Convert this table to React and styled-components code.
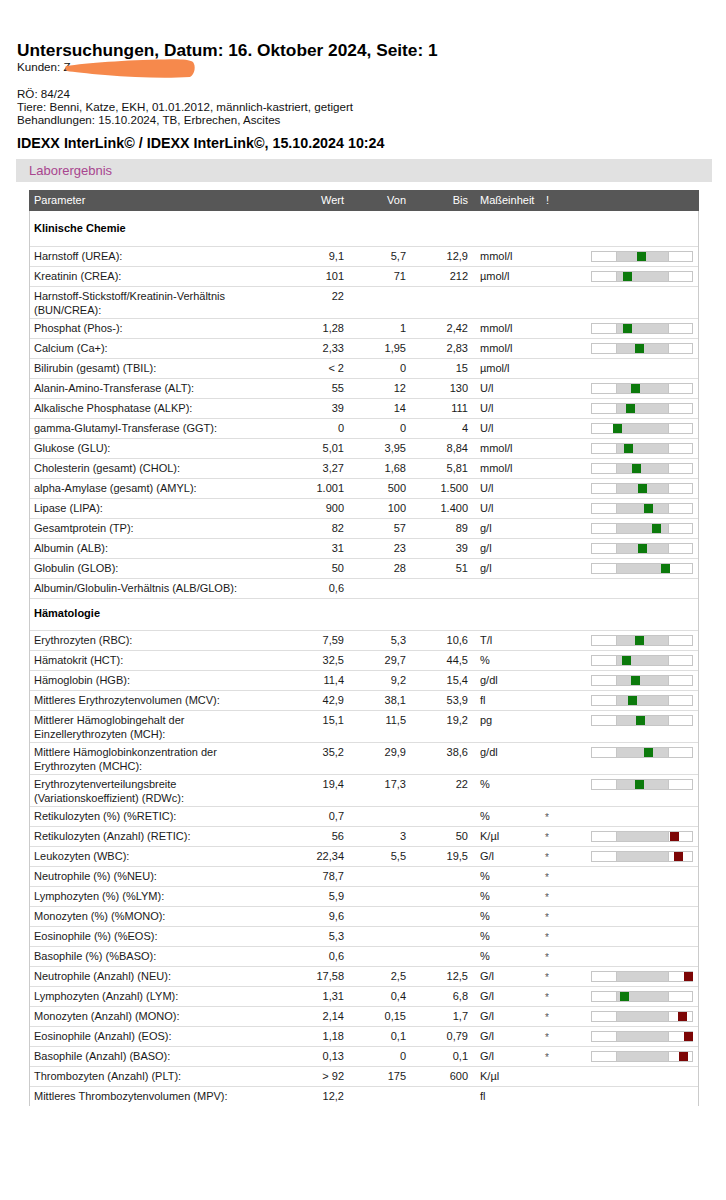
import React from "react";
import styled, { createGlobalStyle } from "styled-components";

const GlobalStyle = createGlobalStyle`
  html, body {
    margin: 0;
    padding: 0;
    background: #fff;
  }
  body {
    font-family: "Liberation Sans", Arial, sans-serif;
    color: #111;
  }
`;

const cols = "254px 60px 62px 62px 72px 45px 1fr";

const Page = styled.div`
  width: 726px;
  box-sizing: border-box;
  padding: 40px 14px 0 16px;
`;

const Head = styled.div`
  padding-left: 1px;
`;

const Title = styled.h1`
  margin: 0;
  font-size: 17.3px;
  line-height: 20px;
  font-weight: bold;
  color: #000;
`;

const MetaLine = styled.div`
  position: relative;
  font-size: 11.6px;
  line-height: 13px;
  margin-top: ${p => (p.$gap ? "14px" : "0")};
`;

const Redaction = styled.svg`
  position: absolute;
  left: 48px;
  top: -2px;
`;

const Source = styled.h2`
  margin: 8px 0 0;
  font-size: 14.3px;
  line-height: 18px;
  font-weight: bold;
  color: #000;
`;

const SectionBar = styled.div`
  margin-top: 7px;
  height: 23px;
  line-height: 23px;
  background: #e1e1e1;
  padding-left: 13px;
  font-size: 13px;
  color: #a8468f;
`;

const Table = styled.div`
  margin: 8px 13px 0;
  font-size: 11px;
`;

const HeadRow = styled.div`
  display: grid;
  grid-template-columns: 1px ${cols} 1px;
  height: 21px;
  line-height: 21px;
  background: #575757;
  color: #fff;
`;

const Body = styled.div`
  border-left: 1px solid #cbcbcb;
  border-right: 1px solid #cbcbcb;
`;

const Section = styled.div`
  box-sizing: border-box;
  padding: ${p => (p.$first ? "10px 0 11px 4px" : "7px 0 10px 4px")};
  border-top: ${p => (p.$first ? "none" : "1px solid #dedede")};
  line-height: 14px;
  font-weight: bold;
  color: #000;
`;

const Row = styled.div`
  display: grid;
  grid-template-columns: ${cols};
  box-sizing: border-box;
  min-height: 20px;
  padding: 2px 0 1px;
  border-top: 1px solid #dedede;
  line-height: 14px;
  color: #1a1a1a;
`;

const Param = styled.div`
  padding-left: 4px;
  white-space: pre-line;
`;

const Num = styled.div`
  text-align: right;
  white-space: nowrap;
`;

const Unit = styled.div`
  padding-left: 12px;
`;

const Flag = styled.div`
  height: 14px;
  display: flex;
  align-items: flex-end;
  padding-left: 5px;
  color: #555;
  font-size: 10px;
  line-height: 10px;
`;

const HeadFlag = styled.div`
  padding-left: 6px;
`;

const BarCell = styled.div`
  height: 14px;
  display: flex;
  align-items: center;
  padding-left: 6px;
`;

const Bar = styled.div`
  position: relative;
  display: flex;
  width: 102px;
  height: 11px;
`;

const Seg = styled.div`
  box-sizing: border-box;
  width: ${p => p.$w}px;
  height: 100%;
  background: ${p => (p.$mid ? "#d2d2d2" : "#fff")};
  border: ${p => (p.$mid ? "none" : "1px solid #c6c6c6")};
  border-top: 1px solid #c6c6c6;
  border-bottom: 1px solid #c6c6c6;
`;

const Marker = styled.div`
  position: absolute;
  top: 1px;
  width: 9px;
  height: 9px;
  background: ${p => (p.$out ? "#7d0606" : "#0c7a0c")};
`;

const num = s => parseFloat(String(s).replace(/\./g, "").replace(",", "."));

const chemie = [
  ["Harnstoff (UREA):", "9,1", "5,7", "12,9", "mmol/l"],
  ["Kreatinin (CREA):", "101", "71", "212", "µmol/l"],
  ["Harnstoff-Stickstoff/Kreatinin-Verhältnis\n(BUN/CREA):", "22", "", "", ""],
  ["Phosphat (Phos-):", "1,28", "1", "2,42", "mmol/l"],
  ["Calcium (Ca+):", "2,33", "1,95", "2,83", "mmol/l"],
  ["Bilirubin (gesamt) (TBIL):", "< 2", "0", "15", "µmol/l"],
  ["Alanin-Amino-Transferase (ALT):", "55", "12", "130", "U/l"],
  ["Alkalische Phosphatase (ALKP):", "39", "14", "111", "U/l"],
  ["gamma-Glutamyl-Transferase (GGT):", "0", "0", "4", "U/l"],
  ["Glukose (GLU):", "5,01", "3,95", "8,84", "mmol/l"],
  ["Cholesterin (gesamt) (CHOL):", "3,27", "1,68", "5,81", "mmol/l"],
  ["alpha-Amylase (gesamt) (AMYL):", "1.001", "500", "1.500", "U/l"],
  ["Lipase (LIPA):", "900", "100", "1.400", "U/l"],
  ["Gesamtprotein (TP):", "82", "57", "89", "g/l"],
  ["Albumin (ALB):", "31", "23", "39", "g/l"],
  ["Globulin (GLOB):", "50", "28", "51", "g/l"],
  ["Albumin/Globulin-Verhältnis (ALB/GLOB):", "0,6", "", "", ""],
];

const haema = [
  ["Erythrozyten (RBC):", "7,59", "5,3", "10,6", "T/l"],
  ["Hämatokrit (HCT):", "32,5", "29,7", "44,5", "%"],
  ["Hämoglobin (HGB):", "11,4", "9,2", "15,4", "g/dl"],
  ["Mittleres Erythrozytenvolumen (MCV):", "42,9", "38,1", "53,9", "fl"],
  ["Mittlerer Hämoglobingehalt der\nEinzellerythrozyten (MCH):", "15,1", "11,5", "19,2", "pg"],
  ["Mittlere Hämoglobinkonzentration der\nErythrozyten (MCHC):", "35,2", "29,9", "38,6", "g/dl"],
  ["Erythrozytenverteilungsbreite\n(Variationskoeffizient) (RDWc):", "19,4", "17,3", "22", "%"],
  ["Retikulozyten (%) (%RETIC):", "0,7", "", "", "%", "*"],
  ["Retikulozyten (Anzahl) (RETIC):", "56", "3", "50", "K/µl", "*"],
  ["Leukozyten (WBC):", "22,34", "5,5", "19,5", "G/l", "*"],
  ["Neutrophile (%) (%NEU):", "78,7", "", "", "%", "*"],
  ["Lymphozyten (%) (%LYM):", "5,9", "", "", "%", "*"],
  ["Monozyten (%) (%MONO):", "9,6", "", "", "%", "*"],
  ["Eosinophile (%) (%EOS):", "5,3", "", "", "%", "*"],
  ["Basophile (%) (%BASO):", "0,6", "", "", "%", "*"],
  ["Neutrophile (Anzahl) (NEU):", "17,58", "2,5", "12,5", "G/l", "*"],
  ["Lymphozyten (Anzahl) (LYM):", "1,31", "0,4", "6,8", "G/l", "*"],
  ["Monozyten (Anzahl) (MONO):", "2,14", "0,15", "1,7", "G/l", "*"],
  ["Eosinophile (Anzahl) (EOS):", "1,18", "0,1", "0,79", "G/l", "*"],
  ["Basophile (Anzahl) (BASO):", "0,13", "0", "0,1", "G/l", "*"],
  ["Thrombozyten (Anzahl) (PLT):", "> 92", "175", "600", "K/µl"],
  ["Mittleres Thrombozytenvolumen (MPV):", "12,2", "", "", "fl"],
];

const RangeBar = ({ value, low, high }) => {
  const v = num(value);
  const lo = num(low);
  const hi = num(high);
  const f = (v - lo) / (hi - lo);
  const center = Math.min(97, Math.max(5, 26 + f * 51));
  return (
    <Bar>
      <Seg $w={26} />
      <Seg $w={51} $mid />
      <Seg $w={25} />
      <Marker $out={v < lo || v > hi} style={{ left: center - 4.5 }} />
    </Bar>
  );
};

const ResultRow = ({ item }) => {
  const [name, value, low, high, unit, flag] = item;
  const showBar = low !== "" && high !== "" && !/[<>]/.test(value);
  return (
    <Row>
      <Param>{name}</Param>
      <Num>{value}</Num>
      <Num>{low}</Num>
      <Num>{high}</Num>
      <Unit>{unit}</Unit>
      <Flag>{flag}</Flag>
      <BarCell>
        {showBar && <RangeBar value={value} low={low} high={high} />}
      </BarCell>
    </Row>
  );
};

const App = () => (
  <Page>
    <GlobalStyle />
    <Head>
      <Title>Untersuchungen, Datum: 16. Oktober 2024, Seite: 1</Title>
      <MetaLine>
        Kunden: Z
        <Redaction width="132" height="22" viewBox="0 0 132 22">
          <path
            d="M1,8 C22,5 60,2 100,1.5 C114,1 124,1.5 128,4 C131,8 130,16 125,19 C100,20.5 70,19.5 40,17 C22,15.5 8,14 2,13 C0,11.5 0,9 1,8 Z"
            fill="#f6894c"
          />
        </Redaction>
      </MetaLine>
      <MetaLine $gap>RÖ: 84/24</MetaLine>
      <MetaLine>
        Tiere: Benni, Katze, EKH, 01.01.2012, männlich-kastriert, getigert
      </MetaLine>
      <MetaLine>Behandlungen: 15.10.2024, TB, Erbrechen, Ascites</MetaLine>
      <Source>IDEXX InterLink© / IDEXX InterLink©, 15.10.2024 10:24</Source>
    </Head>
    <SectionBar>Laborergebnis</SectionBar>
    <Table>
      <HeadRow>
        <span />
        <Param>Parameter</Param>
        <Num>Wert</Num>
        <Num>Von</Num>
        <Num>Bis</Num>
        <Unit>Maßeinheit</Unit>
        <HeadFlag>!</HeadFlag>
        <span />
        <span />
      </HeadRow>
      <Body>
        <Section $first>Klinische Chemie</Section>
        {chemie.map(item => (
          <ResultRow key={item[0]} item={item} />
        ))}
        <Section>Hämatologie</Section>
        {haema.map(item => (
          <ResultRow key={item[0]} item={item} />
        ))}
      </Body>
    </Table>
  </Page>
);

export default App;
